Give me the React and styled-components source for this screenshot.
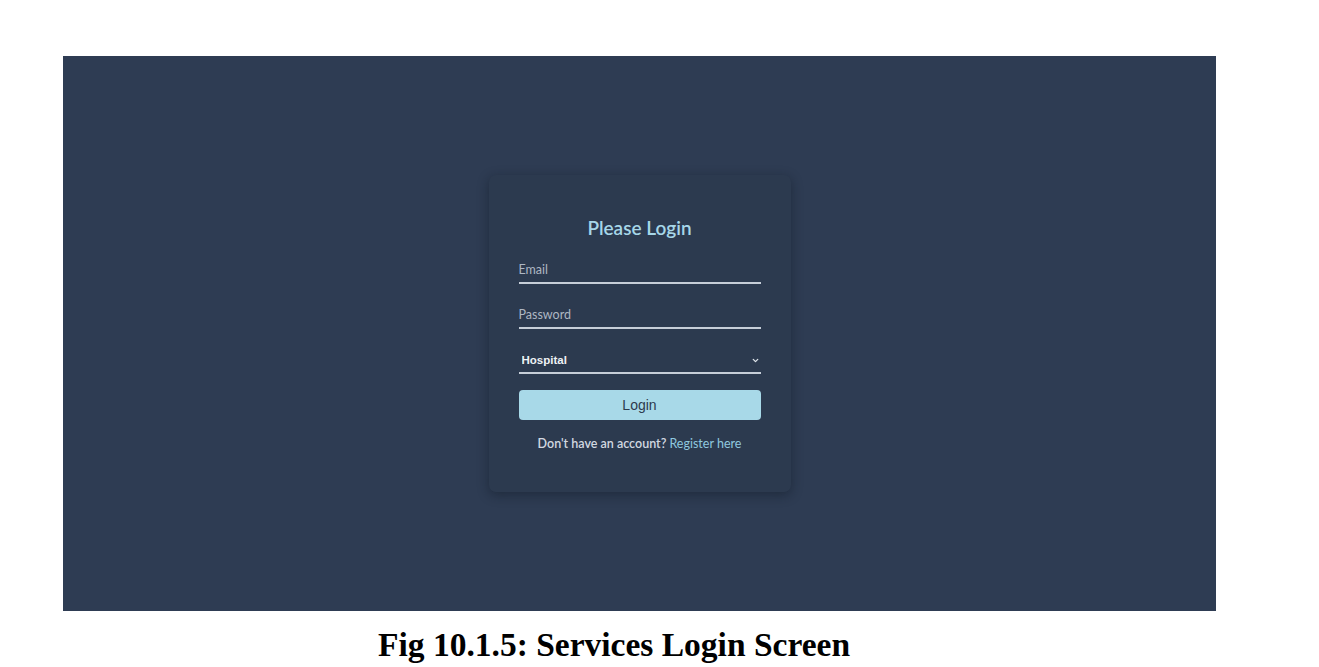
import React from "react";
import styled, { createGlobalStyle } from "styled-components";
import { ChevronDown } from "lucide-react";

const GlobalStyle = createGlobalStyle`
  body {
    margin: 0;
    background: #ffffff;
    font-family: "Lato", "Noto Sans", sans-serif;
  }
`;

const Page = styled.div`
  padding: 56px 0 0 63px;
  display: flex;
  flex-direction: column;
`;

const Panel = styled.div`
  width: 1153px;
  height: 555px;
  background-color: #2e3c53;
  display: flex;
  align-items: center;
  justify-content: center;
`;

const Card = styled.form`
  width: 302px;
  box-sizing: border-box;
  padding: 42px 30px 41px;
  background-color: #2c3a4f;
  border-radius: 7px;
  box-shadow: 0 3px 12px rgba(14, 22, 34, 0.45);
  display: flex;
  flex-direction: column;
`;

const Title = styled.h2`
  margin: 0 0 19px;
  font-size: 19px;
  line-height: 22px;
  font-weight: 600;
  text-align: center;
  color: #a6d6e8;
`;

const Field = styled.input`
  height: 26px;
  box-sizing: border-box;
  margin-bottom: 19px;
  padding: 0 0 2px;
  border: none;
  border-bottom: 2px solid #c6ced8;
  background: transparent;
  font-family: "Lato", sans-serif;
  font-size: 12.5px;
  color: #e6ebf0;
  outline: none;

  &::placeholder {
    color: #aeb7c3;
  }
`;

const SelectWrap = styled.div`
  position: relative;
  height: 26px;
  border-bottom: 2px solid #c6ced8;
  box-sizing: border-box;
`;

const Select = styled.select`
  appearance: none;
  width: 100%;
  height: 100%;
  padding: 0 0 2px 3px;
  border: none;
  background: transparent;
  font-family: "Liberation Sans", Arial, sans-serif;
  font-size: 11.5px;
  font-weight: 600;
  color: #eef2f6;
  outline: none;
`;

const Chevron = styled.span`
  position: absolute;
  right: 1px;
  top: 8px;
  display: flex;
  color: #dfe5eb;
  pointer-events: none;
`;

const Button = styled.button`
  margin-top: 16px;
  height: 30px;
  border: none;
  border-radius: 4px;
  background-color: #a8d9e8;
  font-family: "Liberation Sans", Arial, sans-serif;
  font-size: 14px;
  color: #2d3a4d;
`;

const Footer = styled.p`
  margin: 17px 0 0;
  font-size: 12.5px;
  line-height: 14px;
  font-weight: 600;
  text-align: center;
  color: #d2d8e0;
`;

const Link = styled.a`
  color: #8fc8df;
  font-weight: 400;
  text-decoration: none;
`;

const Caption = styled.div`
  margin-top: 15px;
  padding-left: 315px;
  font-family: "Liberation Serif", "Times New Roman", serif;
  font-size: 33.5px;
  line-height: 38px;
  font-weight: 700;
  color: #000;
`;

export default function App() {
  return (
    <>
      <GlobalStyle />
      <Page>
        <Panel>
          <Card onSubmit={(e) => e.preventDefault()}>
            <Title>Please Login</Title>
            <Field type="email" placeholder="Email" />
            <Field type="password" placeholder="Password" />
            <SelectWrap>
              <Select defaultValue="hospital">
                <option value="hospital">Hospital</option>
              </Select>
              <Chevron>
                <ChevronDown size={9} strokeWidth={3.5} />
              </Chevron>
            </SelectWrap>
            <Button type="submit">Login</Button>
            <Footer>
              Don't have an account? <Link href="#">Register here</Link>
            </Footer>
          </Card>
        </Panel>
        <Caption>Fig 10.1.5: Services Login Screen</Caption>
      </Page>
    </>
  );
}
